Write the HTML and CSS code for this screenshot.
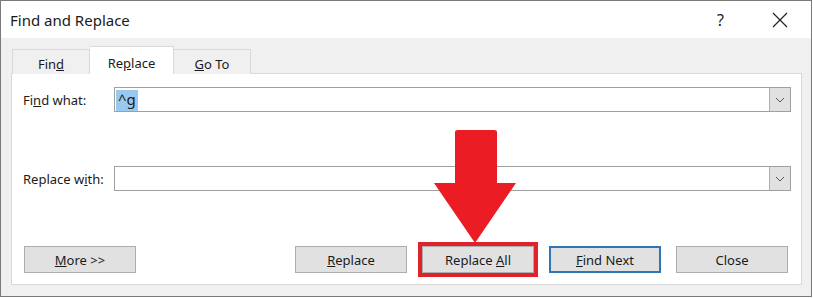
FILE: index.html
```html
<!DOCTYPE html>
<html lang="en">
<head>
    <meta charset="UTF-8">
    <meta name="viewport" content="width=device-width, initial-scale=1.0">
    <title>Find and Replace</title>
    <link rel="stylesheet" href="styles.css">
</head>
<body>
    <div class="window">
        <div class="titlebar">
            <span class="title">Find and Replace</span>
            <span class="help">?</span>
            <span class="close">
                <svg width="16" height="16" viewBox="0 0 16 16"><path d="M1 1 L15 15 M15 1 L1 15" stroke="#222" stroke-width="1.2" fill="none"/></svg>
            </span>
        </div>
        <div class="dialog">
            <div class="tabs">
                <div class="tab">Fin<u>d</u></div>
                <div class="tab active">Re<u>p</u>lace</div>
                <div class="tab"><u>G</u>o To</div>
            </div>
            <div class="panel">
                <div class="field">
                    <label>Fi<u>n</u>d what:</label>
                    <div class="combo">
                        <span class="value"><span class="selected">^g</span></span>
                        <span class="drop"><svg width="10" height="6" viewBox="0 0 10 6"><path d="M1 1 L5 5 L9 1" stroke="#555" fill="none"/></svg></span>
                    </div>
                </div>
                <div class="field second">
                    <label>Replace w<u>i</u>th:</label>
                    <div class="combo">
                        <span class="value"></span>
                        <span class="drop"><svg width="10" height="6" viewBox="0 0 10 6"><path d="M1 1 L5 5 L9 1" stroke="#555" fill="none"/></svg></span>
                    </div>
                </div>
                <div class="buttons">
                    <button><u>M</u>ore &gt;&gt;</button>
                    <div class="spacer"></div>
                    <button><u>R</u>eplace</button>
                    <button class="marked">Replace <u>A</u>ll</button>
                    <button class="default"><u>F</u>ind Next</button>
                    <button>Close</button>
                </div>
            </div>
        </div>
        <svg class="arrow" width="83" height="114" viewBox="0 0 83 114">
            <path d="M21 2 Q21 0 24 0 L60 0 Q63 0 63 2 L63 53 L82 53 L41 113 L0 53 L21 53 Z" fill="#ec1c24"/>
        </svg>
    </div>
</body>
</html>
```

FILE: styles.css
```css
body {
    margin: 0;
    background-color: #ffffff;
    font-family: "Noto Sans", "Open Sans", sans-serif;
    font-size: 13px;
    color: #1a1a1a;
}
.window {
    position: relative;
    width: 810px;
    height: 295px;
    border: 1px solid #7a7a7a;
    background-color: #f0f0f0;
}
.titlebar {
    height: 37px;
    background-color: #ffffff;
    display: flex;
    align-items: center;
}
.title {
    font-size: 15px;
    padding-left: 9px;
    flex: 1;
}
.help {
    font-size: 16px;
    margin-right: 48px;
    color: #222;
}
.close {
    display: flex;
    margin-right: 23px;
}
.dialog {
    padding: 9px 9px 0 10px;
}
.tabs {
    display: flex;
    align-items: flex-end;
    height: 27px;
    padding-left: 1px;
    margin-bottom: -1px;
    position: relative;
}
.tab {
    width: 76px;
    height: 21px;
    padding-top: 3px;
    border: 1px solid #d9d9d9;
    border-bottom: none;
    background-color: #f0f0f0;
    text-align: center;
    line-height: 22px;
}
.tab + .tab {
    border-left: none;
}
.tab.active {
    width: 83px;
    height: 23px;
    padding-top: 4px;
    background-color: #ffffff;
    line-height: 24px;
    position: relative;
    z-index: 1;
}
.panel {
    background-color: #ffffff;
    border: 1px solid #d9d9d9;
    padding: 13px 10px 11px 11px;
}
.field {
    display: flex;
    align-items: center;
}
.field.second {
    margin-top: 54px;
}
.field label {
    width: 91px;
}
.combo {
    flex: 1;
    height: 23px;
    border: 1px solid #a0a0a0;
    display: flex;
    align-items: stretch;
}
.value {
    flex: 1;
    padding: 1px 0 0 1px;
    font-size: 15px;
}
.selected {
    display: inline-block;
    background-color: #99c9ef;
    padding: 0 2px;
    height: 21px;
    line-height: 19px;
}
.drop {
    width: 20px;
    background-color: #e1e1e1;
    border-left: 1px solid #adadad;
    display: flex;
    align-items: center;
    justify-content: center;
}
.buttons {
    display: flex;
    gap: 15px;
    margin-top: 55px;
    padding: 0 3px 0 1px;
}
.spacer {
    flex: 1;
}
button {
    width: 112px;
    height: 27px;
    background-color: #e1e1e1;
    border: 1px solid #adadad;
    font-family: inherit;
    font-size: 13px;
    color: #1a1a1a;
    padding: 0;
}
button.default {
    border: 2px solid #2f76b4;
}
button.marked {
    outline: 4px solid #e0222a;
}
.arrow {
    position: absolute;
    left: 433px;
    top: 129px;
}
```
